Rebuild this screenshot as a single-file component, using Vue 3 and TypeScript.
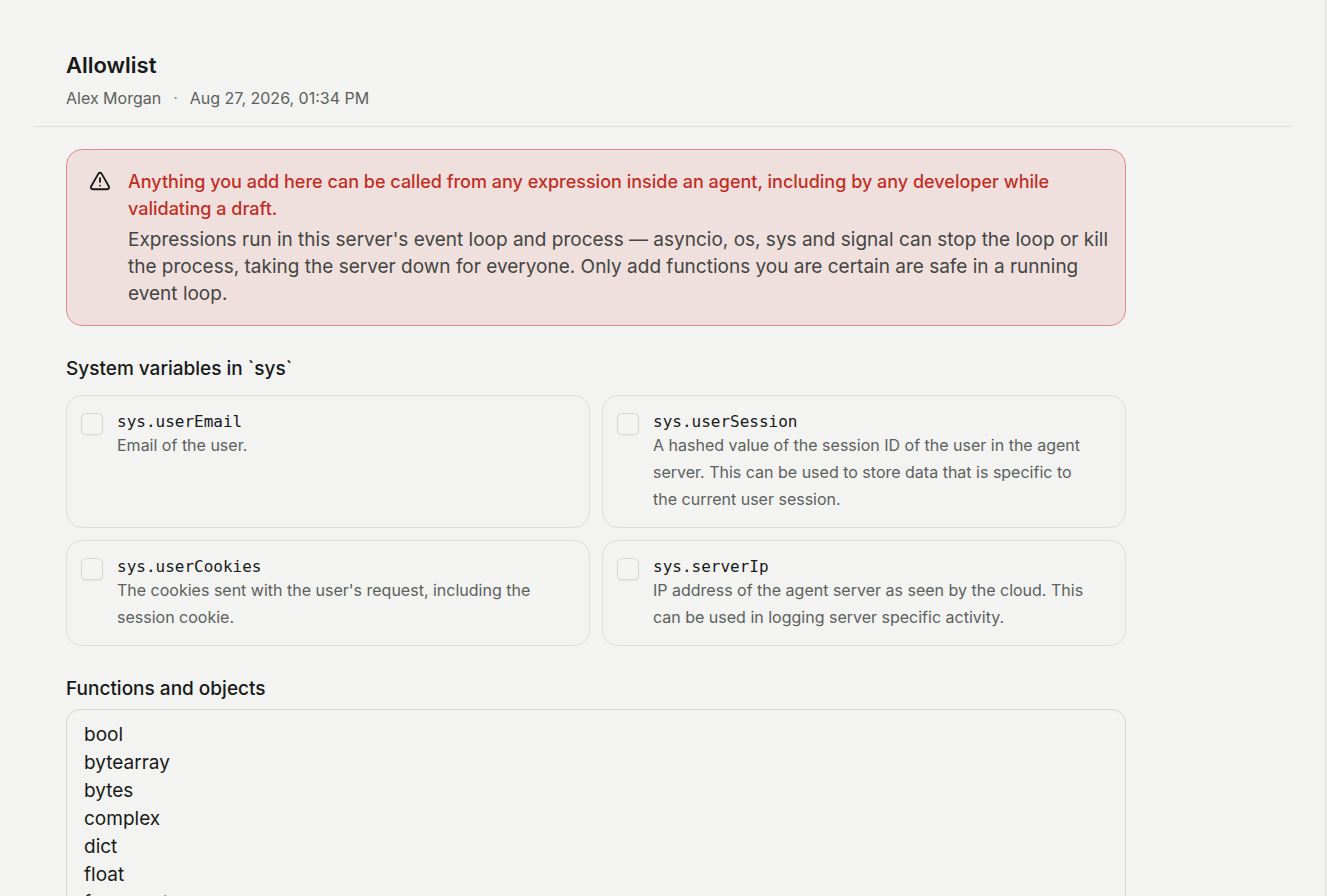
<script setup lang="ts">
import { ref } from 'vue'

interface SystemVariable {
  id: string
  name: string
  description: string
  enabled: boolean
}

const variables = ref<SystemVariable[]>([
  { id: 'user-email', name: 'sys.userEmail', description: 'Email of the user.', enabled: false },
  {
    id: 'user-session',
    name: 'sys.userSession',
    description:
      'A hashed value of the session ID of the user in the agent server. This can be used to store data that is specific to the current user session.',
    enabled: false,
  },
  {
    id: 'user-cookies',
    name: 'sys.userCookies',
    description: "The cookies sent with the user's request, including the session cookie.",
    enabled: false,
  },
  {
    id: 'server-ip',
    name: 'sys.serverIp',
    description:
      'IP address of the agent server as seen by the cloud. This can be used in logging server specific activity.',
    enabled: false,
  },
])

const functions = ref<string>(
  ['bool', 'bytearray', 'bytes', 'complex', 'dict', 'float', 'frozenset'].join('\n'),
)
</script>

<template>
  <main class="page">
    <header class="header">
      <h1 class="title">Allowlist</h1>
      <p class="meta">
        <span>Alex Morgan</span>
        <span class="dot">·</span>
        <time datetime="2026-08-27T13:34">Aug 27, 2026, 01:34 PM</time>
      </p>
    </header>

    <div class="content">
      <section class="alert" role="alert">
        <svg class="alert-icon" viewBox="0 0 24 24" fill="none" stroke="currentColor" stroke-width="2" stroke-linecap="round" stroke-linejoin="round" aria-hidden="true">
          <path d="m21.73 18-8-14a2 2 0 0 0-3.48 0l-8 14A2 2 0 0 0 4 21h16a2 2 0 0 0 1.73-3" />
          <path d="M12 9v4" />
          <path d="M12 17h.01" />
        </svg>
        <div class="alert-body">
          <p class="alert-title">
            Anything you add here can be called from any expression inside an agent, including by any developer while
            validating a draft.
          </p>
          <p class="alert-text">
            Expressions run in this server's event loop and process — asyncio, os, sys and signal can stop the loop or
            kill the process, taking the server down for everyone. Only add functions you are certain are safe in a
            running event loop.
          </p>
        </div>
      </section>

      <section class="group">
        <h2 class="subtitle">System variables in `sys`</h2>
        <div class="cards">
          <label v-for="item in variables" :key="item.id" class="card" :for="item.id">
            <input :id="item.id" v-model="item.enabled" class="check" type="checkbox" />
            <span class="card-body">
              <code class="name">{{ item.name }}</code>
              <span class="description">{{ item.description }}</span>
            </span>
          </label>
        </div>
      </section>

      <section class="group group-tight">
        <label class="subtitle" for="functions">Functions and objects</label>
        <textarea id="functions" v-model="functions" class="functions" rows="12" spellcheck="false"></textarea>
      </section>
    </div>
  </main>
</template>

<style>
body {
  background: #f3f3f1;
}
</style>

<style scoped>
.page {
  box-sizing: border-box;
  height: 100vh;
  margin-right: 1px;
  padding: 48px 34px 0 33px;
  overflow-y: auto;
  scrollbar-width: none;
  border-right: 1px solid #dededc;
  background: #f3f3f1;
  color: #171a19;
  font-family: Inter, "Liberation Sans", sans-serif;
  font-size: 19px;
  line-height: 28px;
}

h1,
h2,
p {
  margin: 0;
}

.header {
  padding: 0 33px 14px;
  border-bottom: 1px solid #dededc;
}

.title {
  margin-bottom: 2px;
  font-size: 22px;
  font-weight: 600;
  line-height: 34px;
}

.meta {
  display: flex;
  gap: 12px;
  color: #5b615d;
  font-size: 16px;
  line-height: 28px;
}

.dot {
  color: #8b908c;
}

.content {
  display: flex;
  flex-direction: column;
  gap: 30px;
  max-width: 1060px;
  padding: 22px 33px 0;
}

.alert {
  display: flex;
  gap: 17px;
  padding: 18px 13px 18px 22px;
  border: 1px solid #db8d88;
  border-radius: 16px;
  background: #efe0de;
}

.alert-icon {
  flex: none;
  width: 22px;
  height: 22px;
  margin-top: 2px;
}

.alert-title {
  margin-bottom: 4px;
  color: #c02f25;
  font-size: 18px;
  font-weight: 500;
  line-height: 27px;
}

.alert-text {
  color: #444542;
  line-height: 27px;
}

.group {
  display: flex;
  flex-direction: column;
  gap: 13px;
}

.group-tight {
  gap: 7px;
}

.subtitle {
  font-size: 19px;
  font-weight: 500;
  line-height: 26px;
}

.cards {
  display: grid;
  grid-template-columns: 1fr 1fr;
  gap: 12px;
}

.card {
  display: flex;
  gap: 14px;
  padding: 16px 28px 14px 14px;
  border: 1px solid #dededc;
  border-radius: 16px;
}

.check {
  box-sizing: border-box;
  flex: none;
  width: 22px;
  height: 22px;
  margin: 1px 0 0;
  appearance: none;
  border: 1px solid #dadad4;
  border-radius: 5px;
  background: #f3f3f1;
  box-shadow: 0 1px 2px rgb(0 0 0 / 6%);
}

.check:checked {
  background: #171a19;
}

.card-body {
  display: flex;
  flex-direction: column;
}

.name {
  font-family: "DejaVu Sans Mono", "Liberation Mono", monospace;
  font-size: 16px;
  line-height: 20px;
}

.description {
  color: #5b615d;
  font-size: 16px;
  line-height: 27px;
}

.functions {
  box-sizing: border-box;
  width: 100%;
  padding: 11px 17px;
  resize: none;
  border: 1px solid #d4d4d2;
  border-radius: 14px;
  outline: none;
  background: transparent;
  color: inherit;
  font: inherit;
}
</style>
